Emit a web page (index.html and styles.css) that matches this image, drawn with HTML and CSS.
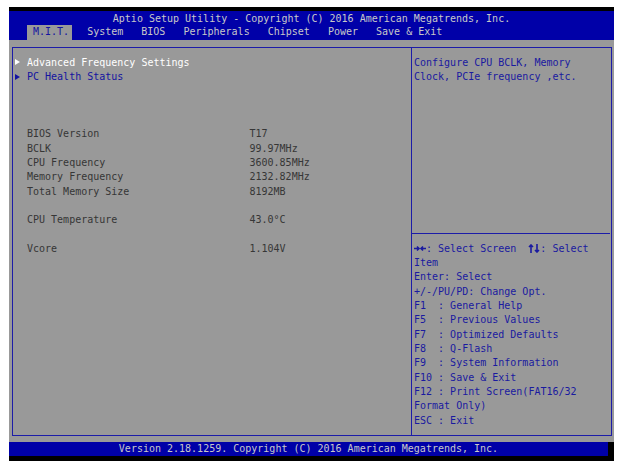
FILE: index.html
```html
<!DOCTYPE html>
<html lang="en">
<head>
    <meta charset="UTF-8">
    <meta name="viewport" content="width=device-width, initial-scale=1.0">
    <title>Aptio Setup Utility</title>
    <link rel="stylesheet" href="styles.css">
</head>
<body>

    <div class="screen">
        <div class="header">
            <div class="title">Aptio Setup Utility - Copyright (C) 2016 American Megatrends, Inc.</div>
            <div class="tabs">
                <span class="tab active">M.I.T.</span>
                <span class="tab">System</span>
                <span class="tab">BIOS</span>
                <span class="tab">Peripherals</span>
                <span class="tab">Chipset</span>
                <span class="tab">Power</span>
                <span class="tab">Save &amp; Exit</span>
            </div>
        </div>

        <div class="main">
            <div class="frame">
                <div class="left">
                    <div class="menu-item selected"><span class="arrow"></span>Advanced Frequency Settings</div>
                    <div class="menu-item"><span class="arrow"></span>PC Health Status</div>
                    <div class="blank"></div>
                    <div class="blank"></div>
                    <div class="blank"></div>
                    <div class="info"><span class="label">BIOS Version</span><span>T17</span></div>
                    <div class="info"><span class="label">BCLK</span><span>99.97MHz</span></div>
                    <div class="info"><span class="label">CPU Frequency</span><span>3600.85MHz</span></div>
                    <div class="info"><span class="label">Memory Frequency</span><span>2132.82MHz</span></div>
                    <div class="info"><span class="label">Total Memory Size</span><span>8192MB</span></div>
                    <div class="blank"></div>
                    <div class="info"><span class="label">CPU Temperature</span><span>43.0°C</span></div>
                    <div class="blank"></div>
                    <div class="info"><span class="label">Vcore</span><span>1.104V</span></div>
                </div>

                <div class="right">
                    <div class="help-top">
                        <div class="line">Configure CPU BCLK, Memory</div>
                        <div class="line">Clock, PCIe frequency ,etc.</div>
                    </div>
                    <div class="help-keys">
                        <div class="line"><svg class="key" width="12" height="9" viewBox="0 0 12 9"><path d="M0 4.5H5M3 2.5L5 4.5L3 6.5M7 4.5H12M9 2.5L7 4.5L9 6.5" fill="none" stroke="currentColor" stroke-width="1.6"/></svg>: Select Screen  <svg class="key" width="12" height="9" viewBox="0 0 12 9"><path d="M3 1V9M1 3L3 1L5 3M9 0V8M7 6L9 8L11 6" fill="none" stroke="currentColor" stroke-width="1.6"/></svg>: Select</div>
                        <div class="line">Item</div>
                        <div class="line">Enter: Select</div>
                        <div class="line">+/-/PU/PD: Change Opt.</div>
                        <div class="line">F1  : General Help</div>
                        <div class="line">F5  : Previous Values</div>
                        <div class="line">F7  : Optimized Defaults</div>
                        <div class="line">F8  : Q-Flash</div>
                        <div class="line">F9  : System Information</div>
                        <div class="line">F10 : Save &amp; Exit</div>
                        <div class="line">F12 : Print Screen(FAT16/32</div>
                        <div class="line">Format Only)</div>
                        <div class="line">ESC : Exit</div>
                    </div>
                </div>
            </div>
        </div>

        <div class="footer">
            <div class="footer-text">Version 2.18.1259. Copyright (C) 2016 American Megatrends, Inc.</div>
        </div>
    </div>

</body>
</html>
```

FILE: styles.css
```css
body {
    margin: 0;
    background: #FFFFFF;
    font-family: 'DejaVu Sans Mono', 'Liberation Mono', monospace;
    font-size: 10px;
    line-height: 14.35px;
}

.screen {
    width: 605px;
    margin: 7px 0 0 9px;
    padding: 4px 0 5px;
    background: #000000;
}

/* top bar: title + menu tabs */
.header {
    background: #0000A8;
    color: #C8C8C8;
}

.title {
    height: 14.35px;
    padding-top: 1px;
    box-sizing: border-box;
    text-align: center;
    white-space: pre;
}

.tabs {
    height: 14.35px;
    padding-left: 24px;
    white-space: nowrap;
}

.tab {
    display: inline-block;
    margin-right: 12px;
}

.tab.active {
    background: #999999;
    color: #1414A0;
    padding: 0 3px 0 6px;
    margin-left: -6px;
    margin-right: 9px;
}

/* grey work area */
.main {
    background: #999999;
    height: 402px;
    padding: 7px 0 0 3px;
    box-sizing: border-box;
}

.frame {
    display: grid;
    grid-template-columns: 399px 198px;
    width: 600px;
    height: 389px;
    border: 1px solid #1C1CA8;
    box-sizing: border-box;
}

.left {
    border-right: 1px solid #1C1CA8;
    padding: 8px 0 0 2px;
}

.menu-item {
    display: flex;
    align-items: center;
    height: 14.35px;
    color: #1414A0;
}

.menu-item.selected {
    color: #FFFFFF;
}

.arrow {
    width: 0;
    height: 0;
    border-left: 5px solid currentColor;
    border-top: 3.5px solid transparent;
    border-bottom: 3.5px solid transparent;
    margin: 0 7px 1px 0;
}

.blank {
    height: 14.35px;
}

.info {
    display: flex;
    height: 14.35px;
    padding-left: 12px;
    color: #363636;
}

.info .label {
    width: 222.5px;
    flex-shrink: 0;
}

/* help column */
.right {
    display: flex;
    flex-direction: column;
    color: #1A1AA0;
}

.help-top {
    height: 185px;
    padding: 8px 0 0 2px;
    box-sizing: border-box;
}

.help-keys {
    border-top: 1px solid #1C1CA8;
    padding: 8px 0 0 2px;
}

.line {
    height: 14.35px;
    white-space: pre;
    overflow: hidden;
}

.key {
    vertical-align: -1px;
}

/* bottom status bar */
.footer {
    height: 14.35px;
    padding-right: 6px;
}

.footer-text {
    height: 14.35px;
    background: #0000A8;
    color: #C8C8C8;
    text-align: center;
    white-space: pre;
}
```
